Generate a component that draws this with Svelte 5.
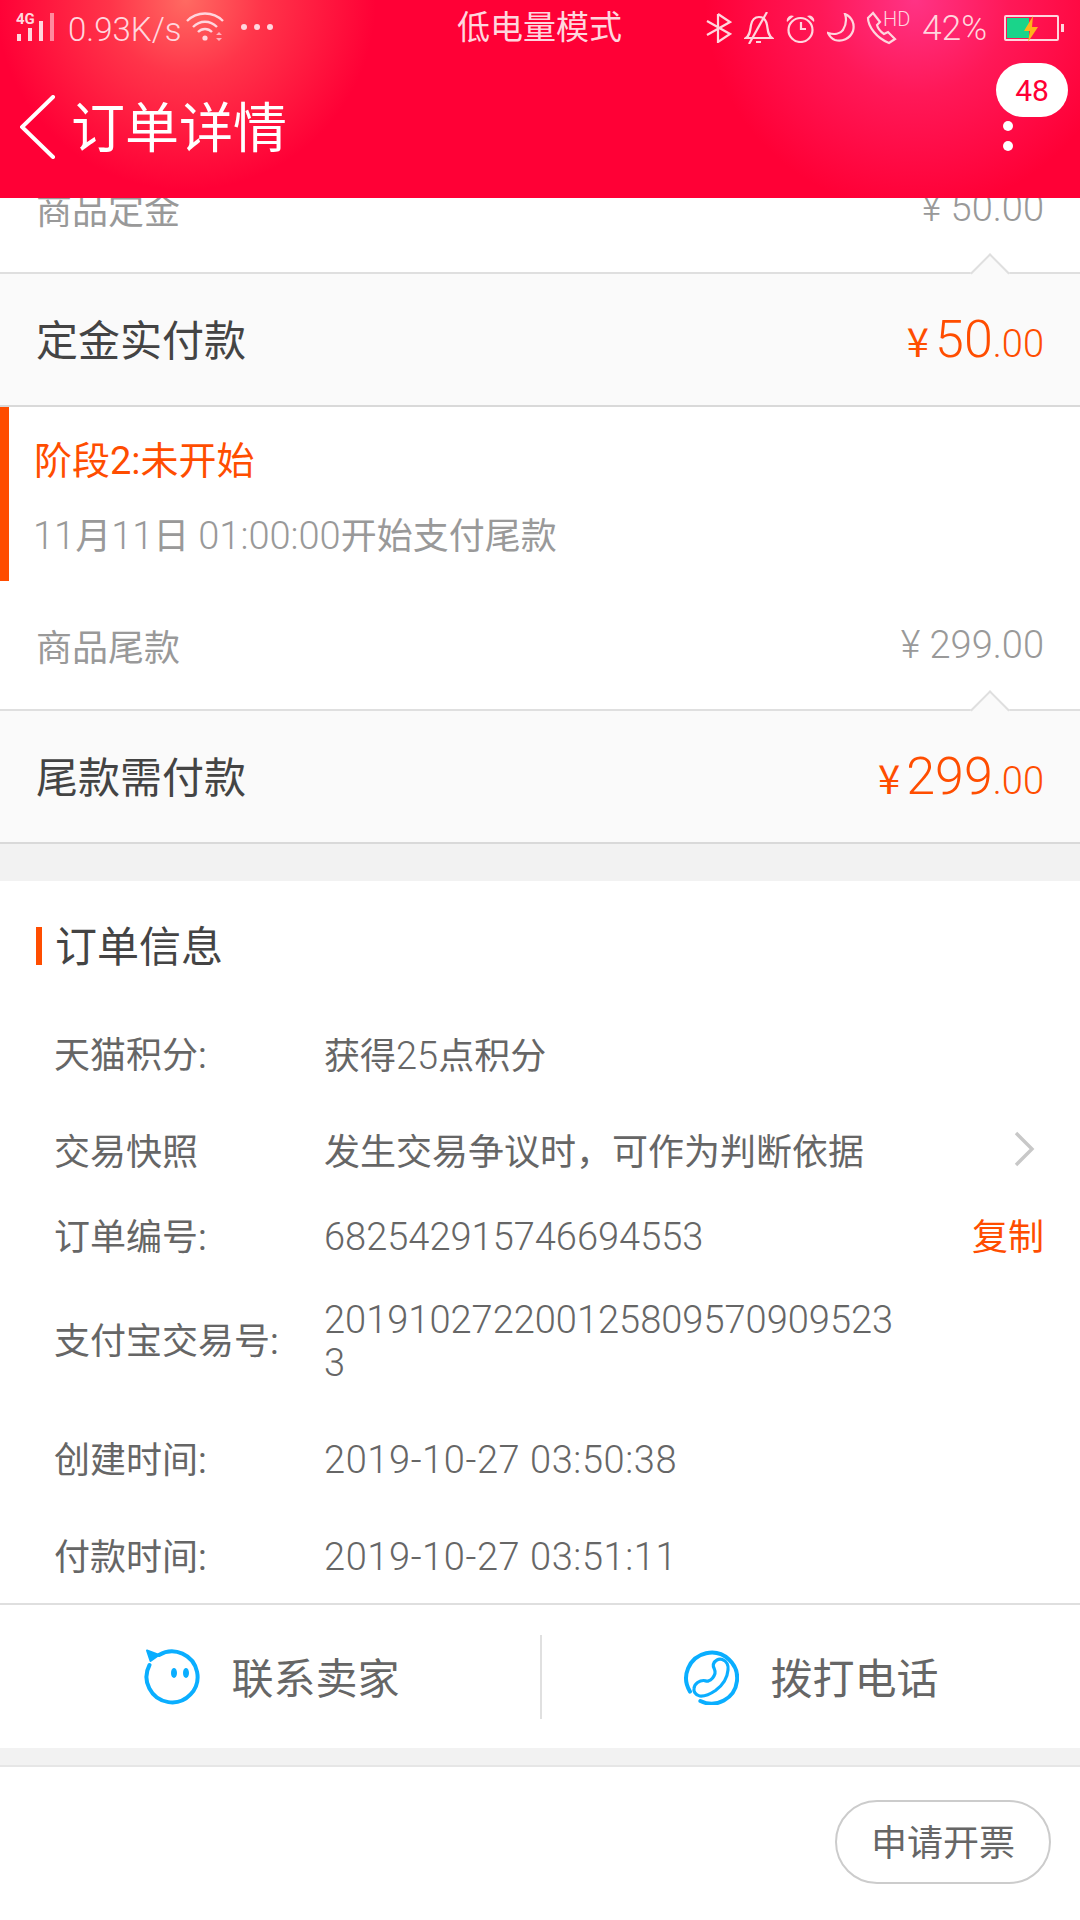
<script>
  const rows = [
    { label: '天猫积分:', parts: [['获得'], ['25', 'n'], ['点积分']], h: 96 },
    { label: '交易快照', parts: [['发生交易争议时，可作为判断依据']], h: 98, arrow: true },
    { label: '订单编号:', parts: [['682542915746694553', 'n']], h: 71, copy: true },
    { label: '支付宝交易号:', parts: [['2019102722001258095709095233', 'n']], h: 137 },
    { label: '创建时间:', parts: [['2019-10-27 03:50:38', 'n time']], h: 101 },
    { label: '付款时间:', parts: [['2019-10-27 03:51:11', 'n time']], h: 93 }
  ];
</script>

<div class="page">
  <header class="header">
    <div class="status">
      <div class="status-left">
        <svg class="signal" width="40" height="30" viewBox="0 0 40 30">
          <text x="0" y="12" class="fourg">4G</text>
          <rect x="1" y="22" width="4" height="7" fill="#ffd6de"/>
          <rect x="12" y="16" width="4" height="13" fill="#ffd6de"/>
          <rect x="23" y="9" width="4" height="20" fill="#ffd6de"/>
          <rect x="34" y="1" width="4" height="28" fill="#ffd6de" opacity=".6"/>
        </svg>
        <span class="speed">0.93K/s</span>
        <svg class="wifi" width="38" height="30" viewBox="0 0 38 30" fill="none" stroke="#ffd6de" stroke-width="2.4">
          <path d="M1 9C11 -1 27 -1 37 9"/>
          <path d="M7 15C14 8 24 8 31 15"/>
          <path d="M12 20C16 16 22 16 26 20"/>
          <circle cx="19" cy="26" r="2.6" fill="#ffd6de" stroke="none"/>
          <path d="M30 23l3-3 3 3zM30 26l3 3 3-3z" fill="#ffb0bd" stroke="none"/>
        </svg>
        <span class="dots"><i></i><i></i><i></i></span>
      </div>
      <span class="lowpower">低电量模式</span>
      <div class="status-right">
        <svg width="26" height="30" viewBox="0 0 26 30" fill="none" stroke="#ffd6de" stroke-width="2.2"><path d="M12 1v28l12-8L1 8"/><path d="M12 1l12 8L1 22"/></svg>
        <svg width="30" height="32" viewBox="0 0 30 32" fill="none" stroke="#ffd6de" stroke-width="2.2"><path d="M2 26c4-3 4-7 5-13 1-5 4-8 8-8s7 3 8 8c1 6 1 10 5 13z"/><path d="M23 0L5 32"/><rect x="12" y="29" width="5" height="2" fill="#ffd6de" stroke="none"/></svg>
        <svg width="29" height="30" viewBox="0 0 29 30" fill="none" stroke="#ffd6de" stroke-width="2.2"><circle cx="14.5" cy="17" r="12"/><path d="M15 9v7h5"/><path d="M1 9a5 5 0 0 1 7-6zM28 9a5 5 0 0 0-7-6z" fill="#ffd6de" stroke="none"/></svg>
        <svg width="28" height="30" viewBox="0 0 28 30" fill="none" stroke="#ffd6de" stroke-width="2.2"><path d="M18 1c7 3 10 10 8 17-3 8-11 11-18 9-3-1-5-3-7-7 6 2 12 1 15-3 3-5 4-10 2-16z"/></svg>
        <svg class="hd" width="39" height="32" viewBox="0 0 39 32" fill="none" stroke="#ffd6de" stroke-width="2.2">
          <path d="M6 1L1 6c0 4 2 9 6 14s10 9 15 11l6-4-7-7-4 2c-3-2-6-5-7-9l3-3z"/>
          <text x="16" y="14" class="hdt">HD</text>
        </svg>
        <span class="pct">42%</span>
        <div class="battery">
          <div class="fill"></div>
          <svg class="bolt" width="16" height="26" viewBox="0 0 16 26"><path d="M10 0L1 15h6L5 26l10-15H9z" fill="#ffb31a"/></svg>
        </div>
        <div class="cap"></div>
      </div>
    </div>
    <div class="nav">
      <svg class="back" width="36" height="64" viewBox="0 0 36 64" fill="none" stroke="#fff" stroke-width="4" stroke-linecap="round"><path d="M33 2L2 32l31 30"/></svg>
      <h1>订单详情</h1>
      <div class="more"><i></i><i></i></div>
      <span class="badge">48</span>
    </div>
  </header>

  <main class="scroll">
    <div class="inner">
      <div class="line-row muted clip"><span>商品定金</span><span class="amt">¥ 50.00</span></div>
      <div class="total">
        <span class="t-label">定金实付款</span>
        <span class="price"><small class="y">¥</small><b>50</b><small>.00</small></span>
      </div>
      <div class="stage">
        <div class="stage-title">阶段2:未开始</div>
        <div class="stage-sub"><span class="n">11</span>月<span class="n">11</span>日 <span class="n">01:00:00</span>开始支付尾款</div>
      </div>
      <div class="line-row muted tail"><span>商品尾款</span><span class="amt">¥ 299.00</span></div>
      <div class="total">
        <span class="t-label">尾款需付款</span>
        <span class="price"><small class="y">¥</small><b>299</b><small>.00</small></span>
      </div>
      <div class="band"></div>
      <section class="info">
        <div class="info-title"><i></i><span>订单信息</span></div>
        {#each rows as r}
          <div class="info-row" style="height:{r.h}px">
            <span class="k">{r.label}</span>
            <span class="v">{#each r.parts as p}<span class={p[1] || ''}>{p[0]}</span>{/each}</span>
            {#if r.arrow}
              <svg class="chev" width="22" height="36" viewBox="0 0 22 36" fill="none" stroke="#c8c8c8" stroke-width="3.4"><path d="M3 2l16 16L3 34"/></svg>
            {/if}
            {#if r.copy}<span class="copy">复制</span>{/if}
          </div>
        {/each}
      </section>
    </div>
  </main>

  <div class="contact">
    <div class="c-item first">
      <svg width="56" height="56" viewBox="0 0 56 56" fill="none" stroke="#0aaeff" stroke-width="4" stroke-linecap="round">
        <path d="M15 6A25.5 25.5 0 1 1 5.5 16"/>
        <path d="M3 1.5L15 6l-8.5 6z" fill="#0aaeff" stroke-linejoin="round" stroke-width="2"/>
        <ellipse cx="30" cy="24" rx="3" ry="5" fill="#0aaeff" stroke="none"/>
        <ellipse cx="42" cy="24" rx="3" ry="5" fill="#0aaeff" stroke="none"/>
      </svg>
      <span>联系卖家</span>
    </div>
    <div class="c-sep"></div>
    <div class="c-item">
      <svg width="56" height="56" viewBox="0 0 56 56" fill="none" stroke="#0aaeff" stroke-width="4" stroke-linecap="round">
        <path d="M7 42.6A25.5 25.5 0 1 1 17.4 52"/>
        <path stroke-width="3.2" d="M30.3 15.5C31.4 11.1 35.9 9.4 39.3 10.6C43.9 12.2 45.6 16.6 45 21C44.4 28.8 39.3 36.5 32.5 41.5C26.9 45.3 21.2 47.5 16.7 47C12.3 46.4 10.4 42 11 39.3C11.6 34.3 16.7 31.5 20.6 31.5C22.3 31.5 23.5 32.6 25.2 32.1C28 31 30.8 28.2 32 24.4C33 21 29.7 18.8 30.3 15.5Z"/>
      </svg>
      <span>拨打电话</span>
    </div>
  </div>
  <div class="gap"></div>
  <div class="actions"><button>申请开票</button></div>
</div>

<style>
  :global(body) { margin: 0; background: #fff; }
  .page {
    width: 1080px; height: 1920px; display: flex; flex-direction: column; overflow: hidden;
    font-family: Roboto, "Noto Sans CJK SC", sans-serif; background: #fff;
  }
  .header {
    flex: 0 0 198px; display: flex; flex-direction: column; color: #fff;
    background:
      radial-gradient(circle 190px at 186px 0, #ff6a62 0%, rgba(255,70,80,.75) 40%, rgba(255,0,54,0) 100%),
      radial-gradient(circle 210px at 915px 0, #ff3385 0%, rgba(255,40,110,.6) 45%, rgba(255,0,54,0) 100%),
      #ff0036;
  }
  .status { height: 54px; display: flex; align-items: center; position: relative; padding: 0 16px; color: #ffd6de; }
  .status-left { display: flex; align-items: center; }
  .signal { overflow: visible; }
  .fourg { font: 700 15px Roboto, sans-serif; fill: #ffd6de; }
  .speed { font-size: 33px; margin-left: 12px; font-weight: 300; line-height: 1; margin-top: 4px; }
  .wifi { margin-left: 4px; margin-top: 0; }
  .dots { display: flex; gap: 7px; margin-left: 17px; }
  .dots i { width: 6px; height: 6px; border-radius: 50%; background: #ffd6de; display: block; }
  .lowpower { position: absolute; left: 457px; top: 8px; font-size: 33px; line-height: 40px; }
  .status-right { margin-left: auto; display: flex; align-items: center; gap: 12px; margin-top: 2px; }
  .pct { font-size: 35px; font-weight: 300; margin-left: 4px; margin-right: 5px; line-height: 1; }
  .hd { overflow: visible; }
  .hdt { font: 300 20px Roboto, sans-serif; fill: #ffd6de; stroke: none; }
  .battery { width: 55px; height: 26px; box-sizing: border-box; border: 2px solid #ffd6de; border-radius: 2px; position: relative; }
  .fill { position: absolute; left: 1px; top: 1px; bottom: 1px; width: 22px; background: #1ad48a; }
  .bolt { position: absolute; left: 17px; top: -1px; }
  .cap { width: 3px; height: 8px; background: #ffd6de; margin-left: -10px; }
  .nav { position: relative; flex: 1; display: flex; align-items: center; }
  .back { margin-left: 20px; margin-top: 2px; }
  h1 { font-size: 54px; font-weight: 400; margin: 0 0 0 15px; line-height: 60px; padding-top: 8px; }
  .more { position: absolute; left: 1003px; top: 67px; display: flex; flex-direction: column; gap: 10px; }
  .more i { display: block; width: 10px; height: 10px; border-radius: 50%; background: #fff; }
  .badge {
    position: absolute; left: 996px; top: 9px; width: 72px; height: 54px; border-radius: 27px;
    background: #fff; color: #ff0036; font-size: 30px; display: flex; align-items: center; justify-content: center;
  }

  .scroll { flex: 1; overflow: hidden; min-height: 0; }
  .inner { margin-top: -54px; }
  .line-row { display: flex; justify-content: space-between; align-items: center; padding: 0 36px; color: #999; font-size: 36px; }
  .clip { height: 128px; }
  .tail { height: 128px; }
  .amt { font-size: 38px; font-weight: 300; }
  .total {
    position: relative; height: 131px; background: #fafafa; display: flex; justify-content: space-between; align-items: center;
    padding: 0 36px; font-size: 42px; color: #444; border-top: 2px solid #dfdfdf; border-bottom: 2px solid #d9d9d9;
  }
  .t-label { margin-top: -4px; }
  .total::before {
    content: ""; position: absolute; right: 76px; top: -15px; width: 28px; height: 28px; box-sizing: border-box; background: #fafafa;
    border-left: 2px solid #dfdfdf; border-top: 2px solid #dfdfdf; transform: rotate(45deg);
  }
  .price { color: #ff4d00; font-weight: 300; display: flex; align-items: baseline; }
  .price b { font-size: 52px; font-weight: 300; margin-left: 6px; }
  .price small { font-size: 38px; }
  .price .y { font-size: 40px; font-family: "Noto Sans CJK SC", sans-serif; font-weight: 400; }
  .stage { height: 174px; border-left: 9px solid #ff4d00; box-sizing: border-box; padding-left: 26px; }
  .stage-title { color: #ff4d00; font-size: 38px; line-height: 50px; padding-top: 29px; margin-left: -1px; }
  .stage-sub { color: #999; font-size: 36px; line-height: 50px; margin-top: 25px; margin-left: -2px; }
  .n { font-size: 38px; font-weight: 300; }
  .band { height: 37px; background: #f2f2f2; }
  .info { background: #fff; }
  .info-title { height: 127px; display: flex; align-items: center; padding-left: 36px; font-size: 42px; color: #444; box-sizing: border-box; }
  .info-title i { width: 6px; height: 38px; background: #ff4d00; margin-right: 13px; margin-top: 2px; }
  .info-title span { margin-top: -3px; }
  .info-row { display: flex; align-items: center; position: relative; padding-left: 54px; font-size: 36px; color: #666; }
  .k { width: 270px; flex: none; line-height: 42px; }
  .v { width: 585px; word-break: break-all; line-height: 42px; }
  .time { letter-spacing: .58px; }
  .chev { position: absolute; left: 1013px; top: 27px; }
  .copy { position: absolute; right: 36px; color: #ff4d00; font-size: 36px; line-height: 42px; }

  .contact { flex: 0 0 145px; display: flex; align-items: center; border-top: 2px solid #dfdfdf; box-sizing: border-box; background: #fff; }
  .c-item { flex: 1; display: flex; align-items: center; justify-content: center; gap: 31px; color: #666; height: 100%; box-sizing: border-box; }
  .first { flex: 0 0 540px; padding-left: 4px; }
  .c-item span { font-size: 42px; margin-top: -2px; }
  .c-sep { width: 2px; height: 84px; background: #e0e0e0; }
  .gap { flex: 0 0 19px; background: #f2f2f2; border-bottom: 2px solid #e6e6e6; box-sizing: border-box; }
  .actions { flex: 0 0 153px; display: flex; justify-content: flex-end; padding: 33px 29px 0 0; box-sizing: border-box; background: #fff; }
  button {
    width: 216px; height: 84px; border: 2px solid #ccc; border-radius: 42px; background: #fff; color: #666;
    font: 400 36px Roboto, "Noto Sans CJK SC", sans-serif; padding: 0 0 4px;
  }
</style>
